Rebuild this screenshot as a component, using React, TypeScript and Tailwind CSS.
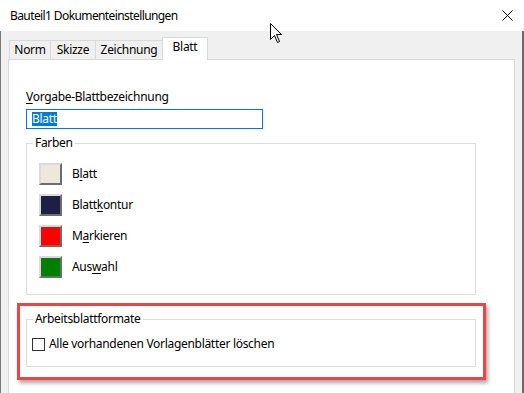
import React from 'react';

const font = { fontFamily: '"Noto Sans", "Segoe UI", sans-serif' };

// Letter with access-key underline
function Key({ children }: { children: React.ReactNode }) {
  return <span className="underline underline-offset-[2px] decoration-[1px]">{children}</span>;
}

const colors = [
  { color: 'bg-[#ece9dc]', label: <>B<Key>l</Key>att</> },
  { color: 'bg-[#1e1e46]', label: <>Blatt<Key>k</Key>ontur</> },
  { color: 'bg-[#ff0000]', label: <>M<Key>a</Key>rkieren</> },
  { color: 'bg-[#008000]', label: <>Aus<Key>w</Key>ahl</> },
];

const tabs = [
  { name: 'Norm', w: 'w-[41px]' },
  { name: 'Skizze', w: 'w-[45px]' },
  { name: 'Zeichnung', w: 'w-[67px]' },
];

export default function App() {
  return (
    <div
      className="relative w-[524px] h-[393px] overflow-hidden bg-white text-[12px] leading-[16px] tracking-[-0.3px] text-black"
      style={font}
    >
      <div className="flex flex-col h-[420px]">
        {/* Title bar */}
        <div className="h-[31px] shrink-0 flex items-center justify-between pl-[10px] pr-[11px] bg-white">
          <span className="text-[12px] tracking-[-0.6px]">Bauteil1 Dokumenteinstellungen</span>
          <svg width="11" height="11" viewBox="0 0 11 11" className="mt-[-1px]">
            <path d="M0.5 0.5 L10.5 10.5 M10.5 0.5 L0.5 10.5" stroke="#000" strokeWidth="1" />
          </svg>
        </div>

        {/* Body */}
        <div className="flex-1 flex flex-col bg-[#f0f0f0] border-l border-r-2 border-l-[#7a7a7a] border-r-[#6b6b6b] pr-[7px]">
          {/* Tabs */}
          <div className="h-[28px] shrink-0 flex items-end pl-[8px]">
            {tabs.map((t) => (
              <div
                key={t.name}
                className={`${t.w} h-[19px] flex items-center justify-center border-l border-t border-[#d9d9d9] bg-[#f0f0f0]`}
              >
                {t.name}
              </div>
            ))}
            <div className="relative z-10 w-[46px] h-[23px] -mb-px pb-[4px] flex items-center justify-center border-l border-t border-r border-[#d9d9d9] bg-white">
              Blatt
            </div>
          </div>

          {/* Panel */}
          <div className="ml-[7px] flex-1 border border-[#d9d9d9] bg-white pl-[17px] pt-[29px]">
            <div>
              <Key>V</Key>orgabe-Blattbezeichnung
            </div>
            <div className="mt-[4px] w-[237px] h-[20px] border border-[#0078d7] flex items-center pl-[5px]">
              <span className="bg-[#0078d7] text-white leading-[14px]">Blatt</span>
            </div>

            {/* Farben */}
            <fieldset className="mt-[6px] w-[450px] border border-[#dcdcdc]">
              <legend className="ml-[6px] px-[2px] leading-[16px]">Farben</legend>
              <div className="flex flex-col gap-[10px] pl-[12px] pt-[12px] pb-[17px]">
                {colors.map((c, i) => (
                  <div key={i} className="flex items-center gap-[10px] h-[21px]">
                    <div
                      className={`w-[23px] h-[22px] ${c.color} border-2 border-t-[#dadada] border-l-[#dadada] border-r-[#6d6d6d] border-b-[#6d6d6d]`}
                    />
                    <span>{c.label}</span>
                  </div>
                ))}
              </div>
            </fieldset>

            {/* Arbeitsblattformate */}
            <fieldset className="mt-[16px] w-[450px] border border-[#dcdcdc]">
              <legend className="ml-[6px] px-[2px] leading-[16px]">Arbeitsblattformate</legend>
              <div className="flex items-center gap-[4px] pl-[5px] pt-[9px] pb-[14px] h-[39px]">
                <div className="w-[13px] h-[13px] border border-[#333] bg-white" />
                <span>Alle vorhandenen Vorlagenblätter löschen</span>
              </div>
            </fieldset>
          </div>
        </div>
      </div>

      {/* Red annotation frame */}
      <div className="absolute left-[17px] top-[303px] w-[469px] h-[77px] border-[3px] border-[#f04444] shadow-[2px_3px_4px_rgba(0,0,0,0.35)] pointer-events-none" />

      {/* Mouse cursor */}
      <svg className="absolute left-[270px] top-[23px]" width="13" height="21" viewBox="0 0 13 21">
        <path
          d="M0.5 0.5 L0.5 16.5 L4.5 12.5 L7.5 19.5 L9.5 18.5 L6.5 11.5 L11.5 11.5 Z"
          fill="#fff"
          stroke="#000"
          strokeWidth="1"
          strokeLinejoin="miter"
        />
      </svg>
    </div>
  );
}
